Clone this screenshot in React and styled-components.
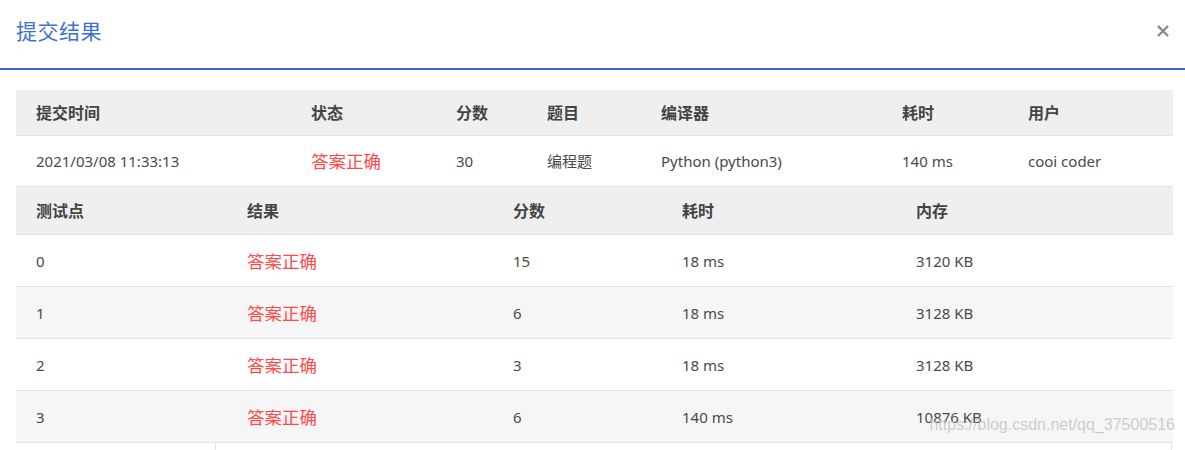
import React from 'react'
import styled, { createGlobalStyle } from 'styled-components'

const GlobalStyle = createGlobalStyle`
    body{
        margin: 0;
        background: #fff;
        font-family: "Noto Sans", "Noto Sans CJK SC", sans-serif;
        color: #444;
    }
`

const summaryCols = [275, 145, 91, 114, 241, 126, 165]
const summaryHead = ['提交时间', '状态', '分数', '题目', '编译器', '耗时', '用户']
const summaryRow = ['2021/03/08 11:33:13', '答案正确', '30', '编程题', 'Python (python3)', '140 ms', 'cooi coder']

const caseCols = [211, 266, 169, 234, 277]
const caseHead = ['测试点', '结果', '分数', '耗时', '内存']
const cases = [
    ['0', '答案正确', '15', '18 ms', '3120 KB'],
    ['1', '答案正确', '6', '18 ms', '3128 KB'],
    ['2', '答案正确', '3', '18 ms', '3128 KB'],
    ['3', '答案正确', '6', '140 ms', '10876 KB'],
]

const CloseIcon = () => (
    <svg width='12' height='12' viewBox='0 0 12 12'>
        <path d='M1 1 L11 11 M11 1 L1 11' stroke='#8a8a8a' strokeWidth='2.4' strokeLinecap='butt' />
    </svg>
)

const Cell = ({ value }) => (
    value === '答案正确' ? <Td><Ok>{value}</Ok></Td> : <Td>{value}</Td>
)

const App = () => {
    return(
        <Modal>
            <GlobalStyle/>
            <Header>
                <Title>提交结果</Title>
                <Close><CloseIcon/></Close>
            </Header>

            <Body>
                <Table>
                    <colgroup>
                        {summaryCols.map((w, i) => <col key={i} style={{ width: w }} />)}
                    </colgroup>
                    <thead>
                        <HeadRow $h={45}>
                            {summaryHead.map(t => <Th key={t}>{t}</Th>)}
                        </HeadRow>
                    </thead>
                    <tbody>
                        <Row $h={51}>
                            {summaryRow.map((t, i) => <Cell key={i} value={t} />)}
                        </Row>
                    </tbody>
                </Table>

                <Table>
                    <colgroup>
                        {caseCols.map((w, i) => <col key={i} style={{ width: w }} />)}
                    </colgroup>
                    <thead>
                        <HeadRow $h={48}>
                            {caseHead.map(t => <Th key={t}>{t}</Th>)}
                        </HeadRow>
                    </thead>
                    <tbody>
                        {cases.map((c, i) => (
                            <Row key={i} $h={52} $striped={i % 2 === 1}>
                                {c.map((t, j) => <Cell key={j} value={t} />)}
                            </Row>
                        ))}
                    </tbody>
                </Table>

                <Pager/>
            </Body>

            <Watermark>https://blog.csdn.net/qq_37500516</Watermark>
        </Modal>
    )
}

export default App

const Modal = styled.div`
    position: relative;
    width: 1185px;
    height: 450px;
    overflow: hidden;
    background: #fff;
`

const Header = styled.div`
    height: 70px;
    border-bottom: 2px solid #3d6bc8;
    display: flex;
    align-items: center;
    justify-content: space-between;
    padding: 0 16px 8px 16px;
    box-sizing: border-box;
`

const Title = styled.h3`
    margin: 0;
    font-size: 21px;
    font-weight: normal;
    color: #3f70cf;
    letter-spacing: 0.5px;
`

const Close = styled.div`
    display: flex;
    align-items: center;
    margin-top: 2px;
`

const Body = styled.div`
    padding: 20px 12px 0 16px;
`

const Table = styled.table`
    width: 1157px;
    border-collapse: collapse;
    table-layout: fixed;
`

const HeadRow = styled.tr`
    height: ${p => p.$h}px;
    background: #efefef;
    border-bottom: 1px solid #e3e3e3;
`

const Row = styled.tr`
    height: ${p => p.$h}px;
    background: ${p => p.$striped ? '#f6f6f6' : '#fff'};
    border-bottom: 1px solid #e3e3e3;
`

const Th = styled.th`
    text-align: left;
    padding: 0 0 0 20px;
    font-size: 16px;
    font-weight: bold;
    color: #444;
`

const Td = styled.td`
    padding: 0 0 0 20px;
    font-size: 15px;
    color: #4a4a4a;
    white-space: nowrap;
`

const Ok = styled.span`
    color: #ff4a4a;
    font-size: 17.5px;
`

const Pager = styled.div`
    margin-left: 199px;
    width: 957px;
    height: 20px;
    border-left: 1px solid #e3e3e3;
    border-right: 1px solid #e3e3e3;
    box-sizing: border-box;
`

const Watermark = styled.div`
    position: absolute;
    right: 10px;
    top: 416px;
    line-height: 18px;
    font-family: "Liberation Sans", Arial, sans-serif;
    font-size: 16px;
    color: rgba(190,190,190,0.75);
`
